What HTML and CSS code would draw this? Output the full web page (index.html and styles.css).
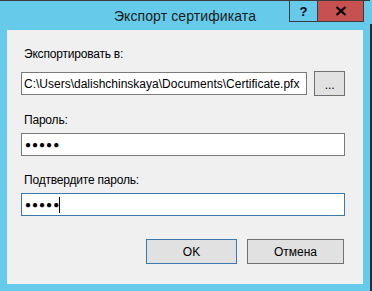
FILE: index.html
```html
<!DOCTYPE html>
<html lang="ru">
<head>
    <meta charset="UTF-8">
    <title>Экспорт сертификата</title>
    <link rel="stylesheet" href="styles.css">
</head>
<body>
    <div class="screen">
        <div class="window">
            <!-- заголовок окна -->
            <div class="titlebar">
                <div></div>
                <div class="title">Экспорт сертификата</div>
                <div class="caption-buttons">
                    <div class="cap-btn help">?</div>
                    <div class="cap-btn close">
                        <svg width="12" height="10" viewBox="0 0 12 10"><path d="M1.5 1 L10.5 9 M10.5 1 L1.5 9" stroke="#000" stroke-width="2.2"/></svg>
                    </div>
                </div>
            </div>

            <div class="content">
                <div class="label first">Экспортировать в:</div>
                <div class="path-row">
                    <div class="field path">C:\Users\dalishchinskaya\Documents\Certificate.pfx</div>
                    <div class="btn browse">...</div>
                </div>

                <div class="label">Пароль:</div>
                <div class="field"><span class="dots">●●●●●</span></div>

                <div class="label">Подтвердите пароль:</div>
                <div class="field focused"><span class="dots">●●●●●</span><span class="caret"></span></div>

                <div class="actions">
                    <div class="btn ok">OK</div>
                    <div class="btn cancel">Отмена</div>
                </div>
            </div>
        </div>
        <div class="edge"></div>
    </div>
</body>
</html>
```

FILE: styles.css
```css
body {
    margin: 0;
    background: #66cbea;
    font-family: "Liberation Sans", Arial, sans-serif;
    font-size: 12px;
    color: #000;
}
.screen {
    display: flex;
    width: 372px;
    height: 291px;
    overflow: hidden;
}
.window {
    width: 370px;
    height: 291px;
    background: #66cbea;
    border-top: 1px solid #3a3a3a;
    box-sizing: border-box;
}
.edge {
    width: 2px;
    background: linear-gradient(#66cbea 24px, #2e2e2e 24px);
}
.titlebar {
    display: grid;
    grid-template-columns: 1fr auto 1fr;
    height: 29px;
}
.title {
    font-size: 14px;
    color: #1c1c1c;
    padding-top: 7px;
    letter-spacing: 0.1px;
}
.caption-buttons {
    display: flex;
    justify-content: flex-end;
    align-items: flex-start;
    padding-right: 6px;
}
.cap-btn {
    height: 20px;
    border: 1px solid #3a3a3a;
    border-top: none;
    box-sizing: content-box;
    display: flex;
    align-items: center;
    justify-content: center;
}
.help {
    width: 27px;
    font-weight: bold;
    font-size: 13px;
}
.close {
    width: 45px;
    background: #c75050;
    border-left: none;
}
.content {
    margin-left: 7px;
    width: 356px;
    height: 254px;
    background: #f0f0f0;
    box-sizing: border-box;
    padding: 0 18px 0 14px;
    display: flex;
    flex-direction: column;
}
.label {
    margin: 17px 0 5px 3px;
    line-height: 15px;
    letter-spacing: -0.2px;
}
.label.first {
    margin-top: 17px;
    margin-bottom: 9px;
}
.path-row {
    display: flex;
    gap: 7px;
    align-items: center;
}
.field {
    height: 23px;
    box-sizing: border-box;
    border: 1px solid #7a7a7a;
    background: #fff;
    padding-left: 2px;
    display: flex;
    align-items: center;
    white-space: nowrap;
    overflow: hidden;
}
.field.path {
    width: 290px;
}
.field.focused {
    border-color: #3a78b0;
}
.dots {
    font-size: 10px;
    letter-spacing: 1px;
    padding-left: 1px;
}
.caret {
    width: 1px;
    height: 16px;
    background: #000;
    margin-left: -1px;
}
.btn {
    height: 25px;
    box-sizing: border-box;
    background: #e1e1e1;
    border: 1px solid #707070;
    display: flex;
    align-items: center;
    justify-content: center;
}
.browse {
    width: 31px;
    padding-top: 2px;
}
.actions {
    display: flex;
    justify-content: flex-end;
    gap: 10px;
    margin-top: 23px;
    padding-right: 1px;
}
.ok {
    width: 91px;
    border-color: #3a78b0;
}
.cancel {
    width: 97px;
}
```
